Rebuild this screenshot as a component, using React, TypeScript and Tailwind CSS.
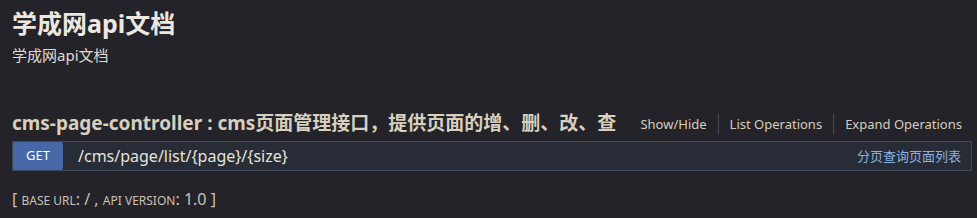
import React from 'react';

const font = { fontFamily: '"Noto Sans", "Noto Sans CJK SC", sans-serif' };

const App = () => {
  return (
    <div className="w-[977px] h-[218px] bg-[#232329] text-[#e3ddd2] overflow-hidden" style={font}>
      <div className="px-3 pt-[6px]">
        <h1 className="text-[25px] leading-[34px] font-bold text-[#ece8e0]">学成网api文档</h1>
        <p className="text-[15px] leading-[20px] mt-[5px] text-[#e0dbd2]">学成网api文档</p>
      </div>

      <div className="mt-[46px] pl-3 pr-[15px]">
        <div className="flex items-center justify-between h-[24px]">
          <h2 className="text-[19px] leading-[24px] font-bold text-[#d8cfbf]">
            cms-page-controller : cms页面管理接口，提供页面的增、删、改、查
          </h2>
          <ul className="flex items-center text-[13px] text-[#d5cdbf] mt-[2px]">
            <li className="pr-[11px] border-r border-[#4a4a50] leading-[20px]">Show/Hide</li>
            <li className="px-[11px] border-r border-[#4a4a50] leading-[20px]">List Operations</li>
            <li className="pl-[11px] leading-[20px]">Expand Operations</li>
          </ul>
        </div>

        <div className="mt-[6px] mr-[-10px] flex items-stretch h-[30px] border border-[#3d4a5c] bg-[#272c36]">
          <span className="w-[50px] bg-[#4668a6] text-white text-[13px] flex items-center justify-center rounded-[2px]">
            GET
          </span>
          <span className="ml-[15px] text-[16px] leading-[28px] text-[#e6e1d8]">/cms/page/list/{'{page}'}/{'{size}'}</span>
          <span className="ml-auto pr-[10px] text-[13px] leading-[28px] text-[#8cb0e0]">分页查询页面列表</span>
        </div>

        <div className="mt-[18px] text-[#c9c2b6] leading-[20px]">
          <span className="text-[16px]">[ </span>
          <span className="text-[12px] uppercase">base url</span>
          <span className="text-[16px]">: / , </span>
          <span className="text-[12px] uppercase">api version</span>
          <span className="text-[16px]">: 1.0 ]</span>
        </div>
      </div>
    </div>
  );
};

export default App;
